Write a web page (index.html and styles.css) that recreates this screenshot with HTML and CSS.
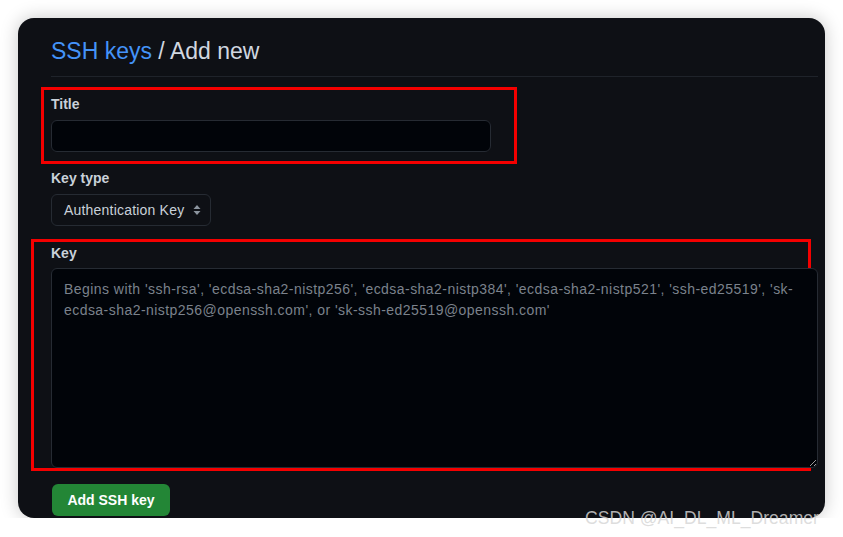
FILE: index.html
```html
<!DOCTYPE html>
<html lang="en">
<head>
    <meta charset="UTF-8">
    <meta name="viewport" content="width=device-width, initial-scale=1.0">
    <title>SSH keys / Add new</title>
    <link rel="stylesheet" href="styles.css">
</head>
<body>
    <div class="window">
        <h2 class="page-title"><a href="#">SSH keys</a> / Add new</h2>

        <div class="mark mark-title">
            <label for="title">Title</label>
            <input type="text" id="title" class="field title-field">
        </div>

        <div class="group">
            <label for="keyType">Key type</label>
            <div class="select">
                <span>Authentication Key</span>
                <svg width="8" height="12" viewBox="0 0 8 12">
                    <path d="M4 1 L7.5 5 H0.5 Z M4 11 L7.5 7 H0.5 Z" fill="#8b949e"/>
                </svg>
            </div>
        </div>

        <div class="mark mark-key">
            <label for="key">Key</label>
            <textarea id="key" class="field key-field" placeholder="Begins with 'ssh-rsa', 'ecdsa-sha2-nistp256', 'ecdsa-sha2-nistp384', 'ecdsa-sha2-nistp521', 'ssh-ed25519', 'sk-ecdsa-sha2-nistp256@openssh.com', or 'sk-ssh-ed25519@openssh.com'"></textarea>
        </div>

        <button class="btn-primary">Add SSH key</button>
    </div>

    <div class="watermark">CSDN @AI_DL_ML_Dreamer</div>
</body>
</html>
```

FILE: styles.css
```css
body {
    margin: 0;
    padding: 18px 0 0 18px;
    background-color: #fff;
    font-family: "Liberation Sans", Arial, sans-serif;
    color-scheme: dark;
}

.window {
    width: 807px;
    height: 500px;
    box-sizing: border-box;
    padding: 18px 7px 0 33px;
    background-color: #0e1015;
    border-radius: 16px;
    box-shadow: 0 0 18px rgba(0, 0, 0, 0.22);
    overflow: hidden;
}

.page-title {
    margin: 0;
    padding-bottom: 10px;
    font-size: 23px;
    font-weight: normal;
    line-height: 30px;
    color: #d1d7e0;
    border-bottom: 1px solid #1f232a;
}

.page-title a {
    color: #4493f8;
    text-decoration: none;
}

label {
    display: block;
    font-size: 14px;
    font-weight: bold;
    line-height: 21px;
    color: #c9d1d9;
    margin-bottom: 5px;
}

/* red annotation frames */
.mark {
    border: 3px solid #f40000;
    box-sizing: border-box;
}

.mark-title {
    width: 476px;
    height: 77px;
    margin: 10px 0 0 -10px;
    padding: 4px 0 0 7px;
}

.mark-key {
    width: 780px;
    height: 232px;
    margin: 13px 0 0 -20px;
    padding: 1px 0 0 17px;
}

.mark-key label {
    margin-bottom: 4px;
}

.group {
    padding-top: 4px;
    margin-bottom: 12px;
}

.field {
    display: block;
    box-sizing: border-box;
    background-color: #010409;
    border: 1px solid #262b33;
    border-radius: 6px;
    color: #c9d1d9;
    font-family: inherit;
    font-size: 14px;
    outline: none;
}

.title-field {
    width: 440px;
    height: 32px;
    padding: 5px 12px;
}

.key-field {
    width: 767px;
    height: 200px;
    padding: 10px 12px;
    line-height: 21px;
    letter-spacing: 0.45px;
    resize: vertical;
}

.key-field::placeholder {
    color: #7b828c;
}

.select {
    display: flex;
    align-items: center;
    justify-content: space-between;
    box-sizing: border-box;
    width: 160px;
    height: 32px;
    padding: 0 9px 0 12px;
    border: 1px solid #262b33;
    border-radius: 6px;
    background-color: #0e1015;
    font-size: 14px;
    letter-spacing: 0.2px;
    color: #c9d1d9;
}

.btn-primary {
    display: block;
    margin-top: 13px;
    margin-left: 1px;
    width: 118px;
    height: 32px;
    padding: 0;
    background-color: #238636;
    color: #fff;
    font-family: inherit;
    font-size: 14px;
    font-weight: bold;
    border: none;
    border-radius: 6px;
    cursor: pointer;
}

.watermark {
    position: absolute;
    left: 585px;
    top: 508px;
    font-family: "Liberation Sans", Arial, sans-serif;
    font-size: 17.6px;
    color: rgba(214, 214, 214, 0.82);
    white-space: nowrap;
}
```
